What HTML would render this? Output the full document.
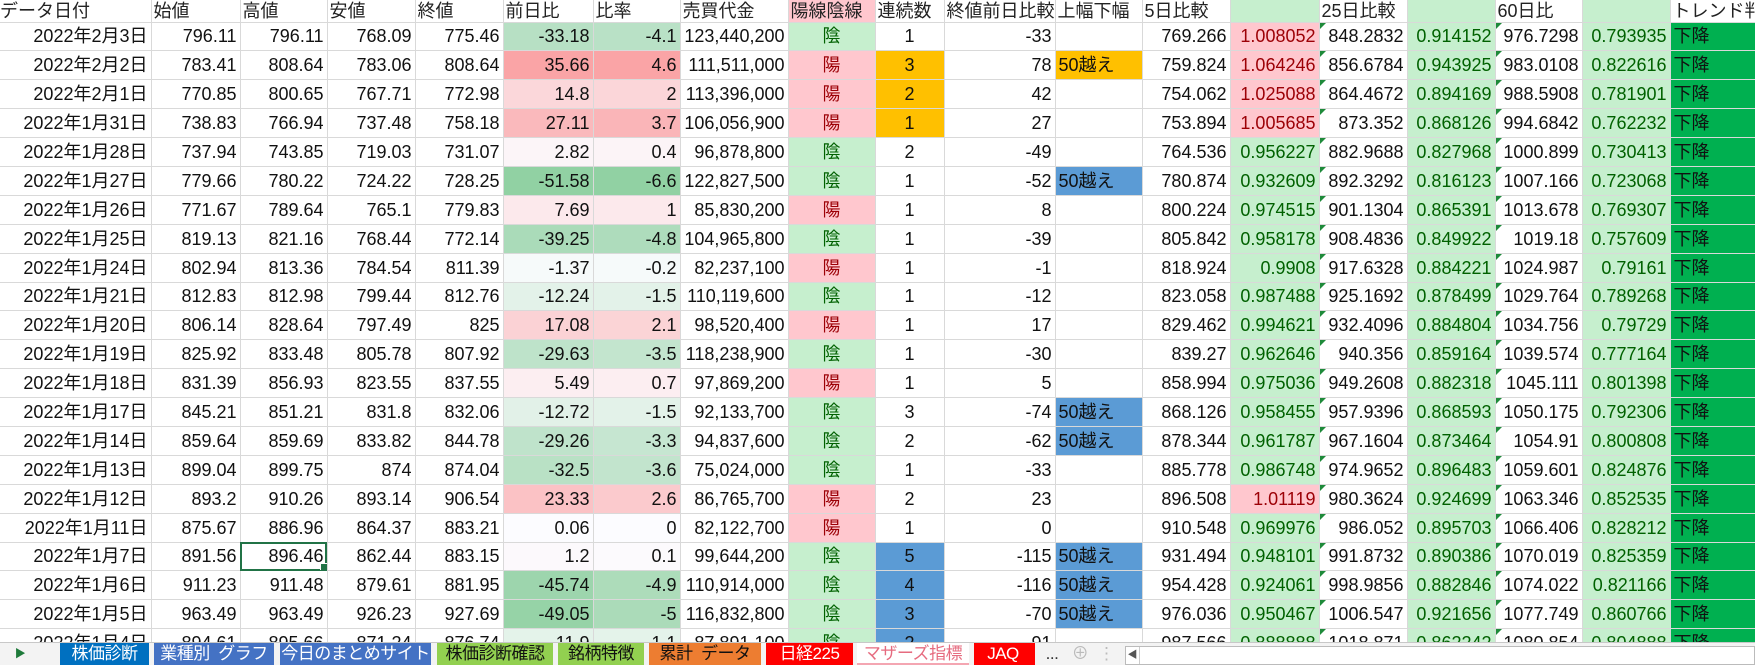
<!DOCTYPE html>
<html><head><meta charset="utf-8">
<style>
*{margin:0;padding:0;box-sizing:border-box}
body{width:1755px;height:665px;overflow:hidden;background:#fff;font-family:"Liberation Sans","Noto Sans CJK JP",sans-serif;font-size:18px;color:#000;position:relative}
table{position:absolute;left:0;top:0;border-collapse:collapse;table-layout:fixed;width:1755px}
td{border-right:1px solid #d9d9d9;border-bottom:1px solid #d9d9d9;height:28.9px;padding:0 3px;text-align:right;white-space:nowrap;overflow:hidden;line-height:20px;position:relative;color:#111}
tr.h td{height:22px;text-align:left;padding:0 2px;color:#222}
td.l{text-align:left}
td.c{text-align:center}
td.p,.p{background:#ffc7ce;color:#9c0006}
td.g,.g{background:#c6efce;color:#006100}
.o{background:#ffc000}
.b{background:#5b9bd5}
.t{background:#00b050;text-align:left;border-right:none}
.tr::before{content:"";position:absolute;left:0;top:0;border-top:6px solid #1e8a3a;border-right:6px solid transparent}
.sel{outline:2px solid #217346;outline-offset:-2px}
.sel::after{content:"";position:absolute;right:-1px;bottom:-1px;width:6px;height:6px;background:#217346;border:1px solid #fff}
#bar{position:absolute;left:0;top:642px;width:1755px;height:23px;background:#f3f3f3;border-top:1px solid #c8c8c8}
.tab{position:absolute;top:0;height:22px;font-size:17px;letter-spacing:-0.5px;line-height:22px;text-align:center;white-space:nowrap;overflow:hidden}
</style></head><body>
<table>
<colgroup><col style="width:151px"><col style="width:89px"><col style="width:87px"><col style="width:88px"><col style="width:88px"><col style="width:90px"><col style="width:87px"><col style="width:108px"><col style="width:87px"><col style="width:69px"><col style="width:111px"><col style="width:87px"><col style="width:88px"><col style="width:89px"><col style="width:88px"><col style="width:88px"><col style="width:87px"><col style="width:88px"><col style="width:85px"></colgroup>
<tr class="h"><td style="padding-left:0">データ日付</td><td>始値</td><td>高値</td><td>安値</td><td>終値</td><td>前日比</td><td>比率</td><td>売買代金</td><td class="p">陽線陰線</td><td>連続数</td><td>終値前日比較</td><td>上幅下幅</td><td>5日比較</td><td class="g"></td><td>25日比較</td><td class="g"></td><td>60日比</td><td class="g"></td><td>トレンド判</td></tr>
<tr><td>2022年2月3日</td><td>796.11</td><td>796.11</td><td>768.09</td><td>775.46</td><td style="background:#b7e0c4">-33.18</td><td style="background:#b9e1c6">-4.1</td><td>123,440,200</td><td class="c g">陰</td><td class="c">1</td><td>-33</td><td></td><td>769.266</td><td class="p">1.008052</td><td class="tr">848.2832</td><td class="g">0.914152</td><td class="tr">976.7298</td><td class="g">0.793935</td><td class="t">下降</td></tr>
<tr><td>2022年2月2日</td><td>783.41</td><td>808.64</td><td>783.06</td><td>808.64</td><td style="background:#faa4a6">35.66</td><td style="background:#faa4a6">4.6</td><td>111,511,000</td><td class="c p">陽</td><td class="c o">3</td><td>78</td><td class="l o">50越え</td><td>759.824</td><td class="p">1.064246</td><td class="tr">856.6784</td><td class="g">0.943925</td><td class="tr">983.0108</td><td class="g">0.822616</td><td class="t">下降</td></tr>
<tr><td>2022年2月1日</td><td>770.85</td><td>800.65</td><td>767.71</td><td>772.98</td><td style="background:#fbd7da">14.8</td><td style="background:#fbd6d9">2</td><td>113,396,000</td><td class="c p">陽</td><td class="c o">2</td><td>42</td><td></td><td>754.062</td><td class="p">1.025088</td><td class="tr">864.4672</td><td class="g">0.894169</td><td class="tr">988.5908</td><td class="g">0.781901</td><td class="t">下降</td></tr>
<tr><td>2022年1月31日</td><td>738.83</td><td>766.94</td><td>737.48</td><td>758.18</td><td style="background:#fab9bc">27.11</td><td style="background:#fab5b8">3.7</td><td>106,056,900</td><td class="c p">陽</td><td class="c o">1</td><td>27</td><td></td><td>753.894</td><td class="p">1.005685</td><td class="tr">873.352</td><td class="g">0.868126</td><td class="tr">994.6842</td><td class="g">0.762232</td><td class="t">下降</td></tr>
<tr><td>2022年1月28日</td><td>737.94</td><td>743.85</td><td>719.03</td><td>731.07</td><td style="background:#fcf5f8">2.82</td><td style="background:#fcf4f7">0.4</td><td>96,878,800</td><td class="c g">陰</td><td class="c">2</td><td>-49</td><td></td><td>764.536</td><td class="g">0.956227</td><td class="tr">882.9688</td><td class="g">0.827968</td><td class="tr">1000.899</td><td class="g">0.730413</td><td class="t">下降</td></tr>
<tr><td>2022年1月27日</td><td>779.66</td><td>780.22</td><td>724.22</td><td>728.25</td><td style="background:#91d1a3">-51.58</td><td style="background:#91d1a3">-6.6</td><td>122,827,500</td><td class="c g">陰</td><td class="c">1</td><td>-52</td><td class="l b">50越え</td><td>780.874</td><td class="g">0.932609</td><td class="tr">892.3292</td><td class="g">0.816123</td><td class="tr">1007.166</td><td class="g">0.723068</td><td class="t">下降</td></tr>
<tr><td>2022年1月26日</td><td>771.67</td><td>789.64</td><td>765.1</td><td>779.83</td><td style="background:#fce9ec">7.69</td><td style="background:#fce9ec">1</td><td>85,830,200</td><td class="c p">陽</td><td class="c">1</td><td>8</td><td></td><td>800.224</td><td class="g">0.974515</td><td class="tr">901.1304</td><td class="g">0.865391</td><td class="tr">1013.678</td><td class="g">0.769307</td><td class="t">下降</td></tr>
<tr><td>2022年1月25日</td><td>819.13</td><td>821.16</td><td>768.44</td><td>772.14</td><td style="background:#aadbb9">-39.25</td><td style="background:#aedcbc">-4.8</td><td>104,965,800</td><td class="c g">陰</td><td class="c">1</td><td>-39</td><td></td><td>805.842</td><td class="g">0.958178</td><td class="tr">908.4836</td><td class="g">0.849922</td><td class="tr">1019.18</td><td class="g">0.757609</td><td class="t">下降</td></tr>
<tr><td>2022年1月24日</td><td>802.94</td><td>813.36</td><td>784.54</td><td>811.39</td><td style="background:#f6fafa">-1.37</td><td style="background:#f6fafa">-0.2</td><td>82,237,100</td><td class="c p">陽</td><td class="c">1</td><td>-1</td><td></td><td>818.924</td><td class="g">0.9908</td><td class="tr">917.6328</td><td class="g">0.884221</td><td class="tr">1024.987</td><td class="g">0.79161</td><td class="t">下降</td></tr>
<tr><td>2022年1月21日</td><td>812.83</td><td>812.98</td><td>799.44</td><td>812.76</td><td style="background:#e3f2e9">-12.24</td><td style="background:#e3f2e9">-1.5</td><td>110,119,600</td><td class="c g">陰</td><td class="c">1</td><td>-12</td><td></td><td>823.058</td><td class="g">0.987488</td><td class="tr">925.1692</td><td class="g">0.878499</td><td class="tr">1029.764</td><td class="g">0.789268</td><td class="t">下降</td></tr>
<tr><td>2022年1月20日</td><td>806.14</td><td>828.64</td><td>797.49</td><td>825</td><td style="background:#fbd2d5">17.08</td><td style="background:#fbd4d6">2.1</td><td>98,520,400</td><td class="c p">陽</td><td class="c">1</td><td>17</td><td></td><td>829.462</td><td class="g">0.994621</td><td class="tr">932.4096</td><td class="g">0.884804</td><td class="tr">1034.756</td><td class="g">0.79729</td><td class="t">下降</td></tr>
<tr><td>2022年1月19日</td><td>825.92</td><td>833.48</td><td>805.78</td><td>807.92</td><td style="background:#bee3ca">-29.63</td><td style="background:#c3e5ce">-3.5</td><td>118,238,900</td><td class="c g">陰</td><td class="c">1</td><td>-30</td><td></td><td>839.27</td><td class="g">0.962646</td><td class="tr">940.356</td><td class="g">0.859164</td><td class="tr">1039.574</td><td class="g">0.777164</td><td class="t">下降</td></tr>
<tr><td>2022年1月18日</td><td>831.39</td><td>856.93</td><td>823.55</td><td>837.55</td><td style="background:#fceef1">5.49</td><td style="background:#fceef1">0.7</td><td>97,869,200</td><td class="c p">陽</td><td class="c">1</td><td>5</td><td></td><td>858.994</td><td class="g">0.975036</td><td class="tr">949.2608</td><td class="g">0.882318</td><td class="tr">1045.111</td><td class="g">0.801398</td><td class="t">下降</td></tr>
<tr><td>2022年1月17日</td><td>845.21</td><td>851.21</td><td>831.8</td><td>832.06</td><td style="background:#e2f1e8">-12.72</td><td style="background:#e3f2e9">-1.5</td><td>92,133,700</td><td class="c g">陰</td><td class="c">3</td><td>-74</td><td class="l b">50越え</td><td>868.126</td><td class="g">0.958455</td><td class="tr">957.9396</td><td class="g">0.868593</td><td class="tr">1050.175</td><td class="g">0.792306</td><td class="t">下降</td></tr>
<tr><td>2022年1月14日</td><td>859.64</td><td>859.69</td><td>833.82</td><td>844.78</td><td style="background:#bfe3cb">-29.26</td><td style="background:#c6e6d1">-3.3</td><td>94,837,600</td><td class="c g">陰</td><td class="c">2</td><td>-62</td><td class="l b">50越え</td><td>878.344</td><td class="g">0.961787</td><td class="tr">967.1604</td><td class="g">0.873464</td><td class="tr">1054.91</td><td class="g">0.800808</td><td class="t">下降</td></tr>
<tr><td>2022年1月13日</td><td>899.04</td><td>899.75</td><td>874</td><td>874.04</td><td style="background:#b9e1c5">-32.5</td><td style="background:#c2e4cd">-3.6</td><td>75,024,000</td><td class="c g">陰</td><td class="c">1</td><td>-33</td><td></td><td>885.778</td><td class="g">0.986748</td><td class="tr">974.9652</td><td class="g">0.896483</td><td class="tr">1059.601</td><td class="g">0.824876</td><td class="t">下降</td></tr>
<tr><td>2022年1月12日</td><td>893.2</td><td>910.26</td><td>893.14</td><td>906.54</td><td style="background:#fbc2c5">23.33</td><td style="background:#fbcacd">2.6</td><td>86,765,700</td><td class="c p">陽</td><td class="c">2</td><td>23</td><td></td><td>896.508</td><td class="p">1.01119</td><td class="tr">980.3624</td><td class="g">0.924699</td><td class="tr">1063.346</td><td class="g">0.852535</td><td class="t">下降</td></tr>
<tr><td>2022年1月11日</td><td>875.67</td><td>886.96</td><td>864.37</td><td>883.21</td><td style="background:#fcfcff">0.06</td><td style="background:#fcfcff">0</td><td>82,122,700</td><td class="c p">陽</td><td class="c">1</td><td>0</td><td></td><td>910.548</td><td class="g">0.969976</td><td class="tr">986.052</td><td class="g">0.895703</td><td class="tr">1066.406</td><td class="g">0.828212</td><td class="t">下降</td></tr>
<tr><td>2022年1月7日</td><td>891.56</td><td class="sel">896.46</td><td>862.44</td><td>883.15</td><td style="background:#fcf9fc">1.2</td><td style="background:#fcfafd">0.1</td><td>99,644,200</td><td class="c g">陰</td><td class="c b">5</td><td>-115</td><td class="l b">50越え</td><td>931.494</td><td class="g">0.948101</td><td class="tr">991.8732</td><td class="g">0.890386</td><td class="tr">1070.019</td><td class="g">0.825359</td><td class="t">下降</td></tr>
<tr><td>2022年1月6日</td><td>911.23</td><td>911.48</td><td>879.61</td><td>881.95</td><td style="background:#9dd5ad">-45.74</td><td style="background:#addcba">-4.9</td><td>110,914,000</td><td class="c g">陰</td><td class="c b">4</td><td>-116</td><td class="l b">50越え</td><td>954.428</td><td class="g">0.924061</td><td class="tr">998.9856</td><td class="g">0.882846</td><td class="tr">1074.022</td><td class="g">0.821166</td><td class="t">下降</td></tr>
<tr><td>2022年1月5日</td><td>963.49</td><td>963.49</td><td>926.23</td><td>927.69</td><td style="background:#96d3a7">-49.05</td><td style="background:#abdbb9">-5</td><td>116,832,800</td><td class="c g">陰</td><td class="c b">3</td><td>-70</td><td class="l b">50越え</td><td>976.036</td><td class="g">0.950467</td><td class="tr">1006.547</td><td class="g">0.921656</td><td class="tr">1077.749</td><td class="g">0.860766</td><td class="t">下降</td></tr>
<tr><td>2022年1月4日</td><td>894.61</td><td>895.66</td><td>871.24</td><td>876.74</td><td style="background:#e4f3ea">-11.9</td><td style="background:#e4f3ea">-1.1</td><td>87,891,100</td><td class="c g">陰</td><td class="c b">2</td><td>-91</td><td></td><td>987.566</td><td class="g">0.888888</td><td class="tr">1018.871</td><td class="g">0.862242</td><td class="tr">1080.854</td><td class="g">0.804888</td><td class="t">下降</td></tr>
</table>
<div id="bar">
<div class="tab" style="left:14px;width:12px;color:#1e7a3a;font-size:11px">&#9654;</div>
<div class="tab" style="left:60px;width:89px;background:#0070c0;color:#fff">株価診断</div>
<div class="tab" style="left:154px;width:120px;background:#4472c4;color:#fff">業種別&nbsp; グラフ</div>
<div class="tab" style="left:280px;width:151px;background:#4472c4;color:#fff">今日のまとめサイト</div>
<div class="tab" style="left:437px;width:116px;background:#92d050;color:#111">株価診断確認</div>
<div class="tab" style="left:558px;width:86px;background:#92d050;color:#111">銘柄特徴</div>
<div class="tab" style="left:649px;width:112px;background:#ed7d31;color:#111">累計&nbsp; データ</div>
<div class="tab" style="left:766px;width:87px;background:#ff0000;color:#fff">日経225</div>
<div class="tab" style="left:857px;width:112px;background:#fff;color:#e66b7f;border-bottom:2px solid #f4a6b2">マザーズ指標</div>
<div class="tab" style="left:974px;width:58px;background:#ff0000;color:#fff">JAQ</div>
<div class="tab" style="left:1032px;width:3px;background:#ff0000"></div>
<div class="tab" style="left:1040px;width:24px;color:#333">...</div>
<div class="tab" style="left:1068px;width:24px;color:#bbb">&#8853;</div>
<div class="tab" style="left:1098px;width:12px;color:#bbb">&#8942;</div>
<div style="position:absolute;left:1125px;top:3px;width:630px;height:19px;background:#fff;border:1px solid #bbb"></div>
<div style="position:absolute;left:1126px;top:4px;width:14px;height:17px;border-right:1px solid #ccc;font-size:10px;line-height:17px;text-align:center;color:#555;background:#fff">&#9664;</div>
</div>
</body></html>
